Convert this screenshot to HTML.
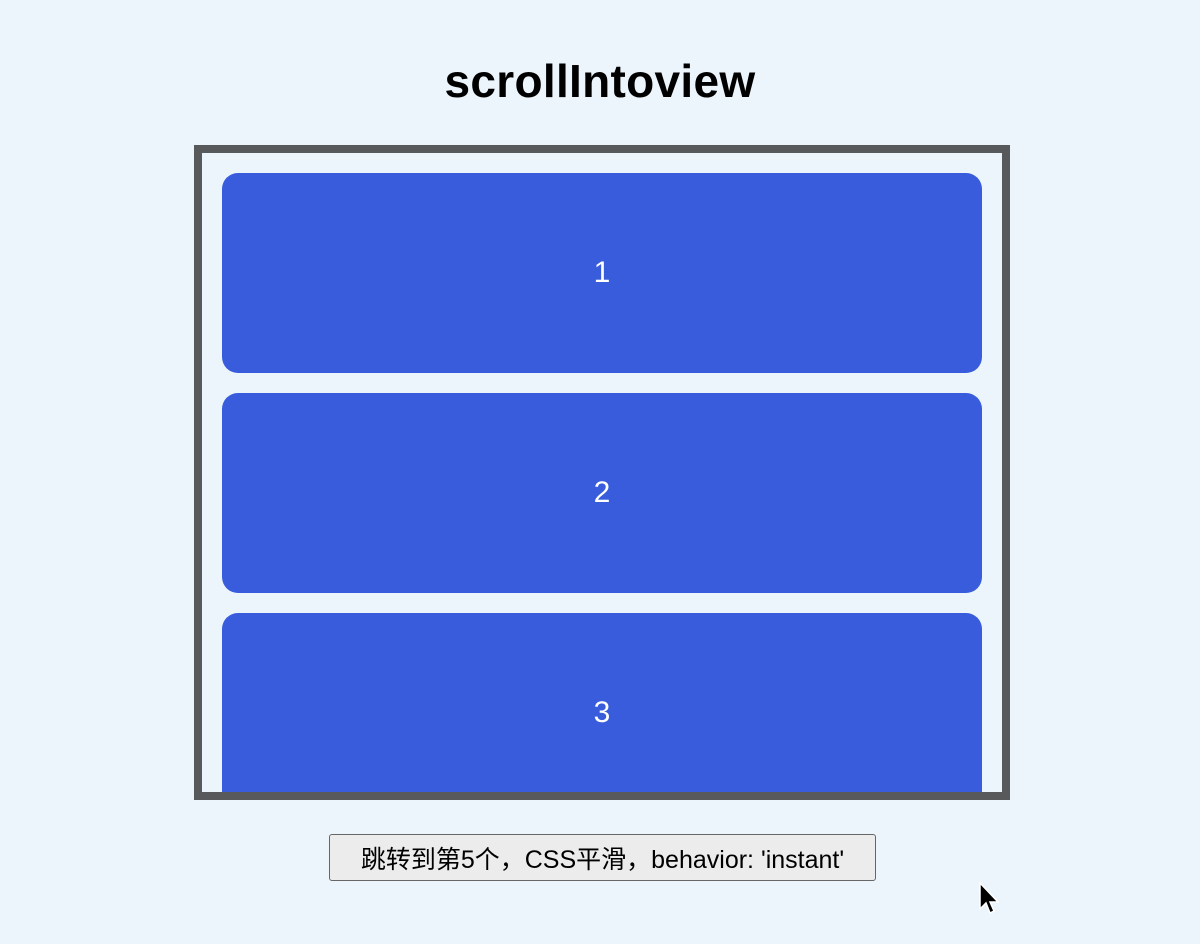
<!DOCTYPE html>
<html><head><meta charset="utf-8"><style>
html,body{margin:0;padding:0;background:#ebf5fb;width:1200px;height:944px;overflow:hidden;font-family:"Liberation Sans","Noto Sans CJK SC",sans-serif}
h1{position:absolute;top:55px;left:0;width:1200px;text-align:center;margin:0;font-size:46px;font-weight:bold;color:#000;line-height:52px;letter-spacing:0.3px}
.box{position:absolute;left:194px;top:145px;width:800px;height:639px;border:8px solid #58595b;overflow:hidden;background:#ebf5fb}
.card{position:absolute;left:20px;width:760px;height:200px;background:#385cdb;border-radius:16px;color:#fff;font-size:30px;display:flex;align-items:center;justify-content:center}
.btn{position:absolute;left:329px;top:834px;width:545px;height:45px;border:1px solid #666;border-radius:3px;background:#ececec;font-size:25px;display:flex;align-items:center;justify-content:center;box-sizing:content-box;color:#000;white-space:nowrap}
</style></head><body>
<h1>scrollIntoview</h1>
<div class="box">
<div class="card" style="top:20px">1</div>
<div class="card" style="top:240px">2</div>
<div class="card" style="top:460px">3</div>
</div>
<div class="btn">跳转到第5个，CSS平滑，behavior: 'instant'</div>
<svg style="position:absolute;left:978px;top:882px" width="24" height="36" viewBox="0 0 24 36"><path d="M2 1 L2 27 L8 21 L12 31 L16 29 L12 20 L20 20 Z" fill="#000" stroke="#fff" stroke-width="1.5"/></svg>
</body></html>
